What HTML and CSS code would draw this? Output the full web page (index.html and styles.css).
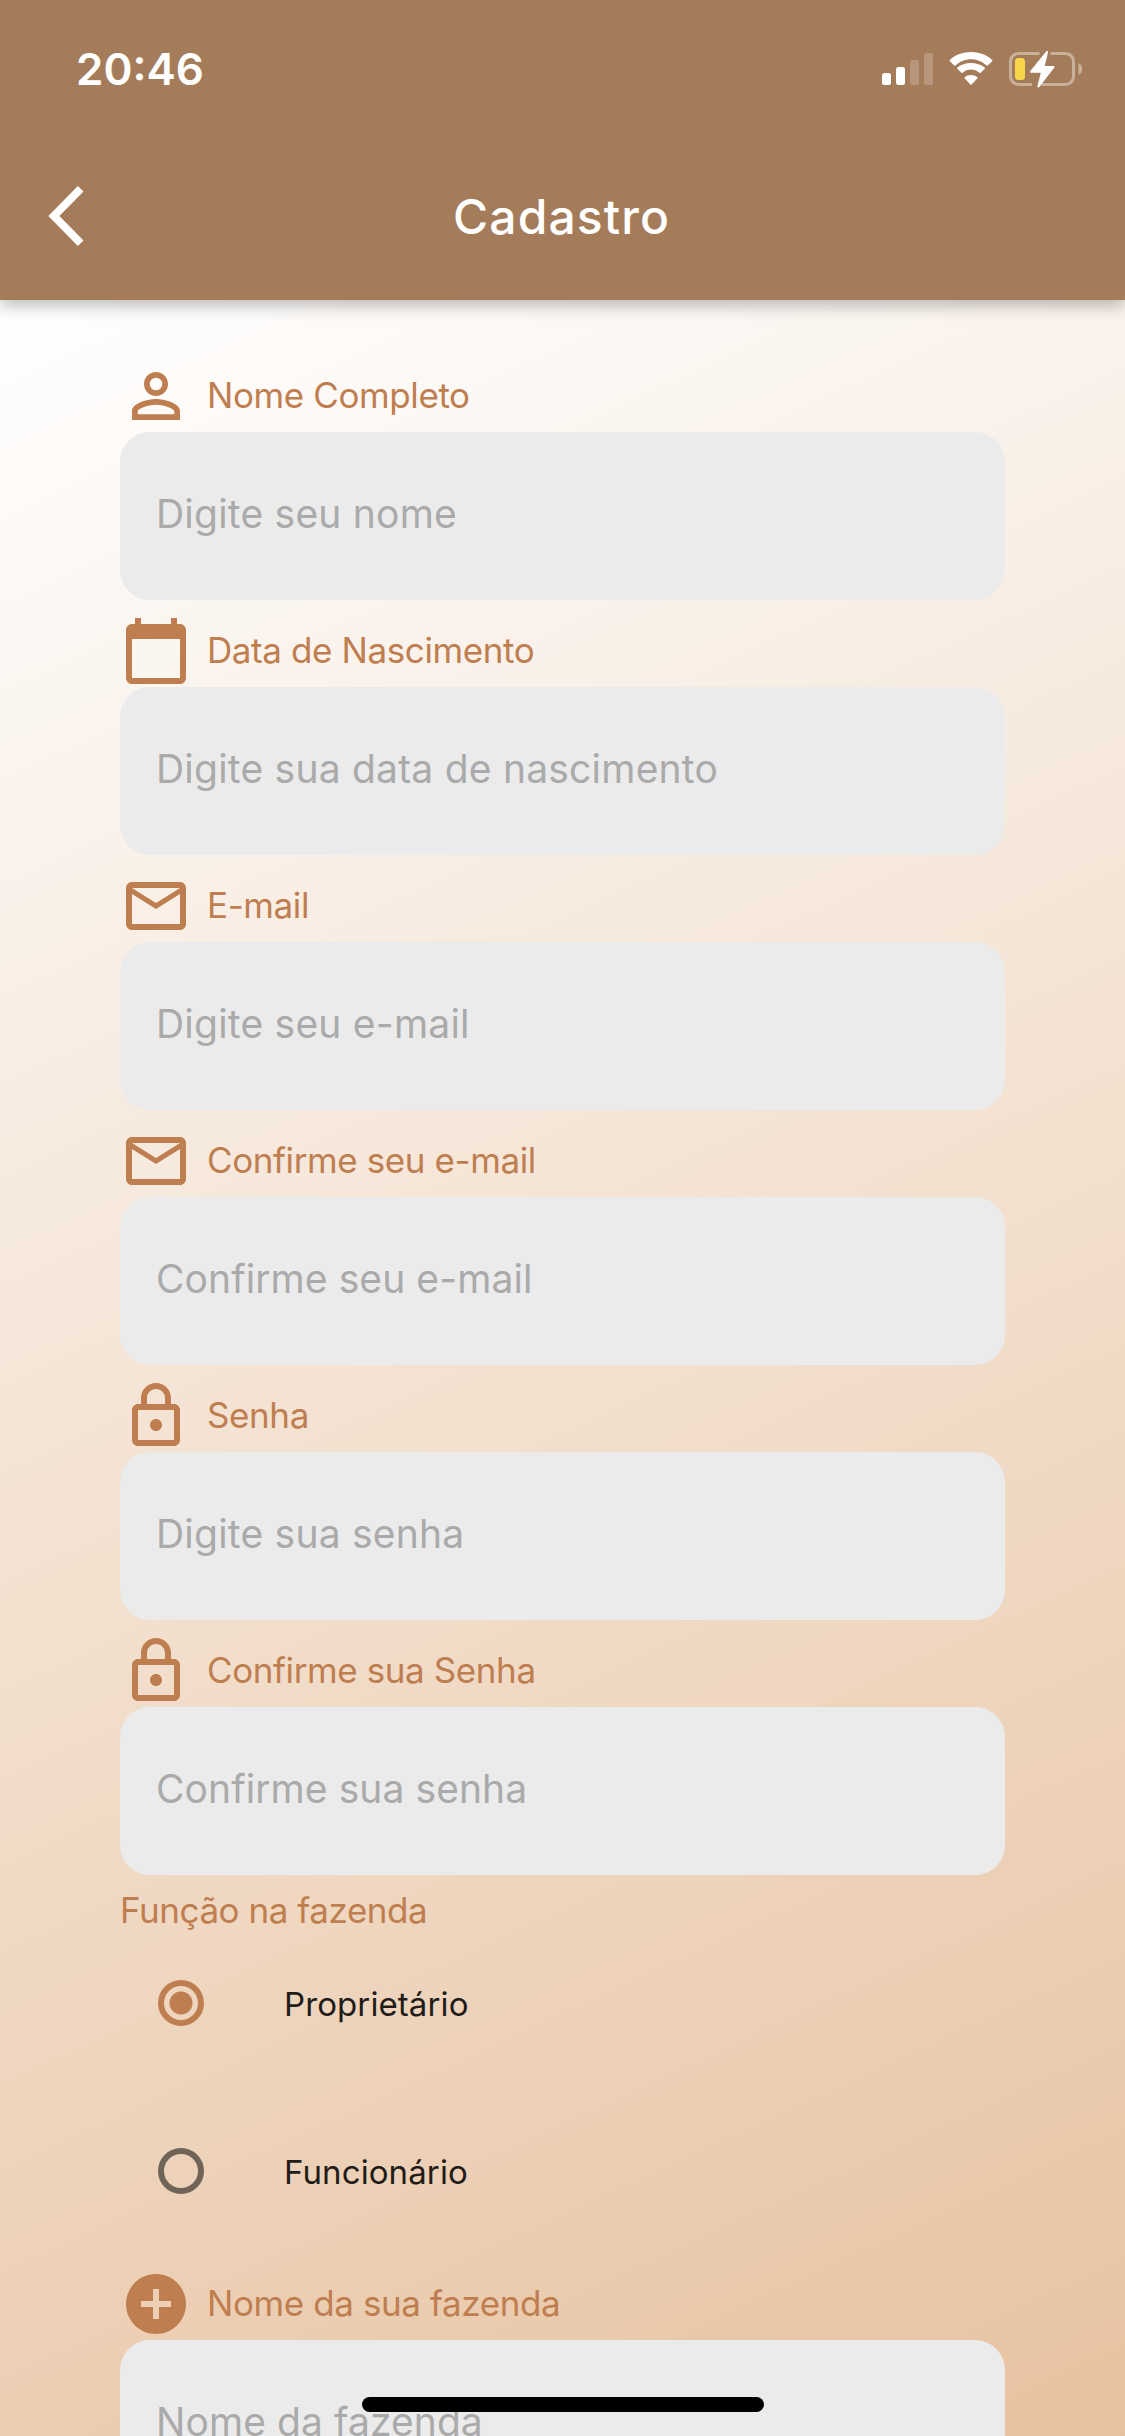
FILE: index.html
```html
<!DOCTYPE html>
<html lang="pt-BR">
<head>
<meta charset="utf-8">
<title>Cadastro</title>
<link rel="stylesheet" href="styles.css">
</head>
<body>
<svg class="sprite" aria-hidden="true">
  <symbol id="person" viewBox="0 0 24 24"><path d="M12 5.9a2.1 2.1 0 1 1 0 4.2 2.1 2.1 0 0 1 0-4.2m0 9c2.97 0 6.1 1.46 6.1 2.1v1.1H5.9V17c0-.64 3.13-2.1 6.1-2.1M12 4C9.79 4 8 5.79 8 8s1.790 4 4 4 4-1.790 4-4-1.790-4-4-4zm0 9c-2.670 0-8 1.340-8 4v3h16v-3c0-2.660-5.330-4-8-4z"/></symbol>
  <symbol id="calendar" viewBox="0 0 24 24"><path d="M20 3h-1V1h-2v2H7V1H5v2H4c-1.100 0-2 .9-2 2v16c0 1.100.9 2 2 2h16c1.100 0 2-.9 2-2V5c0-1.100-.9-2-2-2zm0 18H4V8h16v13z"/></symbol>
  <symbol id="mail" viewBox="0 0 24 24"><path d="M22 6c0-1.100-.9-2-2-2H4c-1.100 0-2 .9-2 2v12c0 1.100.9 2 2 2h16c1.100 0 2-.9 2-2V6zm-2 0l-8 5-8-5h16zm0 12H4V8l8 5 8-5v10z"/></symbol>
  <symbol id="lock" viewBox="0 0 24 24"><path d="M18 8h-1V6c0-2.760-2.240-5-5-5S7 3.240 7 6v2H6c-1.100 0-2 .9-2 2v10c0 1.100.9 2 2 2h12c1.100 0 2-.9 2-2V10c0-1.100-.9-2-2-2zM9 6c0-1.660 1.340-3 3-3s3 1.340 3 3v2H9V6zm9 14H6V10h12v10zm-6-3c1.100 0 2-.9 2-2s-.9-2-2-2-2 .9-2 2 .9 2 2 2z"/></symbol>
  <symbol id="add" viewBox="0 0 24 24"><path d="M12 2C6.480 2 2 6.480 2 12s4.480 10 10 10 10-4.480 10-10S17.520 2 12 2zm5 11h-4v4h-2v-4H7v-2h4V7h2v4h4v2z"/></symbol>
</svg>

<div class="screen">
  <header class="header">
    <div class="status">
      <span class="time">20:46</span>
      <svg class="indicators" viewBox="0 0 206 40" width="206" height="40" fill="#fff">
        <g>
          <rect x="4" y="23" width="9" height="12" rx="2.500"/>
          <rect x="18" y="17" width="9" height="18" rx="2.500"/>
          <rect x="32" y="10" width="9" height="25" rx="2.500" opacity=".2"/>
          <rect x="46" y="3" width="9" height="32" rx="2.500" opacity=".2"/>
        </g>
        <g transform="translate(70 2)">
          <path d="M23 7.200c6 0 11.500 2.300 15.600 6.300.4.300.8.300 1.100 0l4.500-4.300c.4-.4.4-.9 0-1.300C38.500 2.700 31 0 23 0S7.500 2.700 1.800 7.900c-.4.4-.4.900 0 1.300l4.500 4.300c.3.300.7.300 1.100 0C11.500 9.500 17 7.200 23 7.200z"/>
          <path d="M23 17.500c3.200 0 6.200 1.200 8.500 3.300.4.300.8.300 1.100 0l4-3.900c.4-.4.4-.9 0-1.300C33 12.600 28.200 11 23 11s-10 1.600-13.600 4.600c-.4.4-.4.900 0 1.300l4 3.900c.3.300.7.300 1.100 0 2.300-2.100 5.300-3.300 8.500-3.300z"/>
          <path d="M23 23c2.400 0 4.600.8 6.300 2.200.4.400.4.900 0 1.300l-5.700 6c-.4.400-.8.400-1.200 0l-5.700-6c-.4-.4-.4-.9 0-1.300C18.400 23.800 20.600 23 23 23z"/>
        </g>
        <g fill="none" stroke="#fff" stroke-width="3" opacity=".4">
          <path d="M161.500 3.500H140.500a8 8 0 0 0-8 8v15a8 8 0 0 0 8 8H154"/>
          <path d="M172.500 3.500H187.500a8 8 0 0 1 8 8v15a8 8 0 0 1-8 8H163.500"/>
        </g>
        <path opacity=".4" d="M200.500 13c2.200 1 3.700 3.300 3.700 6s-1.500 5-3.700 6z"/>
        <rect x="137" y="8" width="10" height="22" rx="3.500" fill="#f7d64a"/>
        <path d="M168.300 1.300c1-.7 2 0 1.700 1.200l-3.300 13.400h8.700c1 0 1.500 1 .8 1.900l-14.800 19.200c-1 1-2.300.4-2-.9l3.400-13.300h-9.700c-1 0-1.500-1-.8-1.900z"/>
      </svg>
    </div>
    <div class="appbar">
      <svg class="back" viewBox="0 0 36 60" width="36" height="60"><path d="M29.900 0 35.500 5.500 11.400 30 35.500 54.500 29.900 60 .3 30z" fill="#fff"/></svg>
      <h1 class="title">Cadastro</h1>
    </div>
  </header>

  <main class="form">
    <label class="field">
      <span class="caption"><svg class="icon"><use href="#person"/></svg>Nome Completo</span>
      <input class="input" type="text" placeholder="Digite seu nome">
    </label>
    <label class="field">
      <span class="caption"><svg class="icon"><use href="#calendar"/></svg>Data de Nascimento</span>
      <input class="input" type="text" placeholder="Digite sua data de nascimento">
    </label>
    <label class="field">
      <span class="caption"><svg class="icon"><use href="#mail"/></svg>E-mail</span>
      <input class="input" type="text" placeholder="Digite seu e-mail">
    </label>
    <label class="field">
      <span class="caption"><svg class="icon"><use href="#mail"/></svg>Confirme seu e-mail</span>
      <input class="input confirm" type="text" placeholder="Confirme seu e-mail">
    </label>
    <label class="field">
      <span class="caption"><svg class="icon"><use href="#lock"/></svg>Senha</span>
      <input class="input" type="password" placeholder="Digite sua senha">
    </label>
    <label class="field">
      <span class="caption"><svg class="icon"><use href="#lock"/></svg>Confirme sua Senha</span>
      <input class="input confirm" type="password" placeholder="Confirme sua senha">
    </label>
    <section class="roles">
      <h2 class="roles-title">Função na fazenda</h2>
      <label class="role"><input class="radio" type="radio" name="role" checked><span class="role-name">Proprietário</span></label>
      <label class="role"><input class="radio" type="radio" name="role"><span class="role-name">Funcionário</span></label>
    </section>
    <label class="field">
      <span class="caption"><svg class="icon"><use href="#add"/></svg>Nome da sua fazenda</span>
      <input class="input confirm" type="text" placeholder="Nome da fazenda">
    </label>
  </main>
  <div class="home-indicator"></div>
</div>
</body>
</html>
```

FILE: styles.css
```css
* { box-sizing: border-box; }

body {
  margin: 0;
  font-family: Inter, "Liberation Sans", sans-serif;
}

.sprite { display: none; }

.screen {
  position: relative;
  display: flex;
  flex-direction: column;
  width: 1125px;
  height: 2436px;
  overflow: hidden;
}

.header {
  z-index: 1;
  flex: none;
  height: 300px;
  background: #a57c5a;
  color: #fff;
  box-shadow: 0 6px 15px rgba(0, 0, 0, .26);
}

.status {
  display: flex;
  justify-content: space-between;
  align-items: flex-start;
  height: 132px;
  padding: 42px 41px 0 76px;
}

.time {
  font-size: 44px;
  font-weight: 600;
  line-height: 54px;
}

.indicators { margin-top: 8px; }

.appbar {
  display: grid;
  grid-template-columns: 36px 1fr 36px;
  align-items: center;
  height: 168px;
  padding: 0 50px 0 48px;
}

.title {
  margin: 0;
  text-align: center;
  font-size: 48px;
  font-weight: 500;
  letter-spacing: 1.1px;
}

.form {
  flex: 1;
  min-height: 0;
  padding: 60px 120px 0;
  background: linear-gradient(155.2deg, #fff, #e4bb95) 0 0 / 1125px 2436px no-repeat;
}

.field {
  display: block;
  margin-bottom: 15px;
}

.caption {
  display: flex;
  align-items: center;
  gap: 15px;
  height: 72px;
  padding-bottom: 2px;
  color: #bf7e4f;
  font-size: 35px;
  line-height: 70px;
  letter-spacing: -.4px;
}

.icon {
  flex: none;
  width: 72px;
  height: 72px;
  margin-bottom: -2px;
  fill: currentColor;
}

.input {
  display: block;
  width: 100%;
  height: 168px;
  padding: 0 36px 5px;
  border: 0;
  border-radius: 30px;
  background: #ebebeb;
  font: 39px Inter, "Liberation Sans", sans-serif;
  letter-spacing: .22px;
}

.confirm { letter-spacing: .08px; }

.input::placeholder { color: #aaa; }

.roles {
  height: 378px;
  margin: -15px 0 15px;
}

.roles-title {
  height: 44px;
  margin: 0;
  color: #bf7e4f;
  font-size: 35px;
  font-weight: 400;
  line-height: 70px;
  letter-spacing: -.45px;
}

.role {
  display: flex;
  align-items: center;
  gap: 80px;
  height: 168px;
  padding-left: 38px;
  color: #1f1c19;
  font-size: 33px;
  letter-spacing: .1px;
}

.role-name { padding-top: 2px; }

.radio {
  appearance: none;
  width: 46px;
  height: 46px;
  margin: 0;
  border: 6px solid #6f6457;
  border-radius: 50%;
}

.radio:checked {
  border-color: #bf7e4f;
  background: radial-gradient(circle, #bf7e4f 11px, transparent 12px);
}

.home-indicator {
  position: absolute;
  z-index: 2;
  left: 362px;
  bottom: 24px;
  width: 402px;
  height: 15px;
  border-radius: 8px;
  background: #000;
}
```
